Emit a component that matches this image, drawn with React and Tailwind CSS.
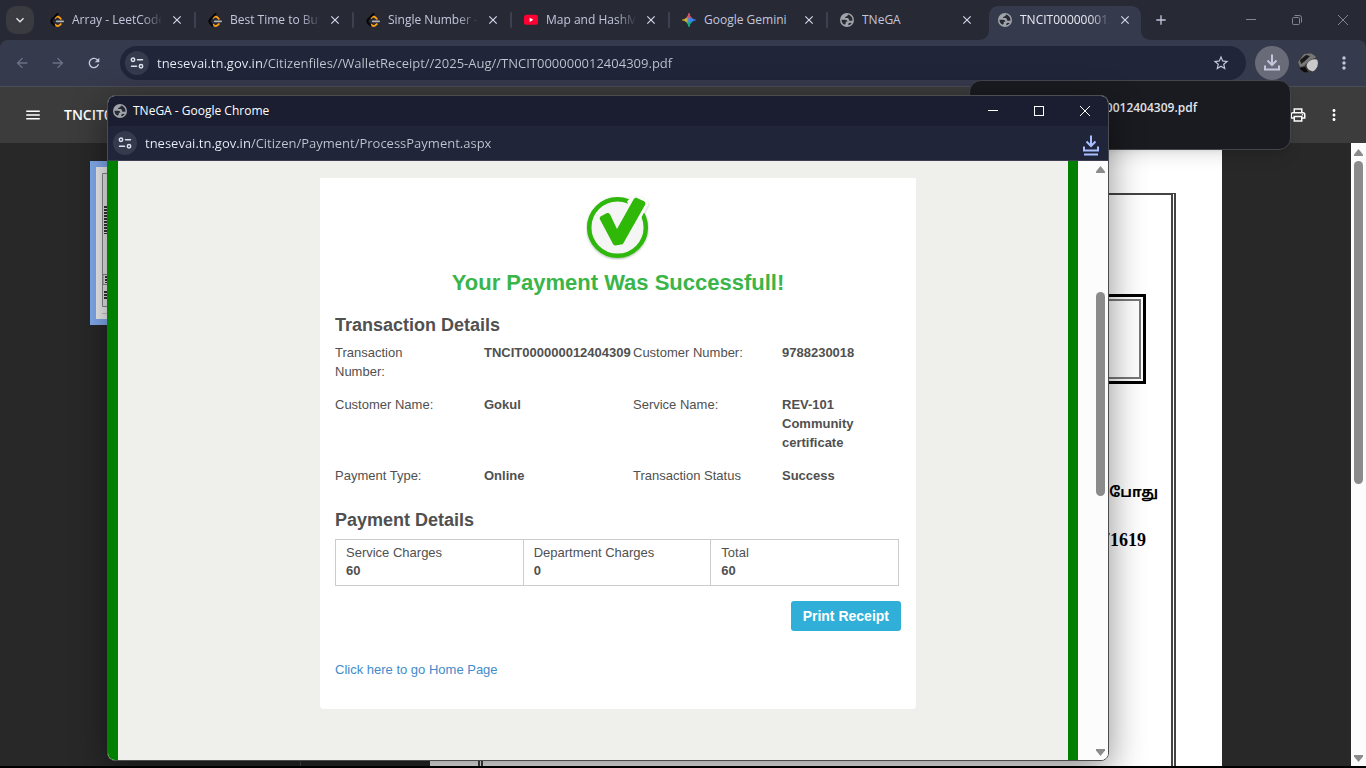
import React from "react";
import {
  MdArrowBack,
  MdArrowForward,
  MdRefresh,
  MdStarBorder,
  MdMoreVert,
  MdMenu,
  MdOutlinePrint,
  MdClose,
  MdAdd,
  MdKeyboardArrowDown,
} from "react-icons/md";

const RECEIPT_NO = "TNCIT000000012404309";

function LeetCodeIcon() {
  return (
    <svg viewBox="0 0 24 24" className="size-3.5" fill="none" strokeLinecap="round" strokeLinejoin="round" aria-hidden="true">
      <path d="M9 8.500c2.600-2.800 5-3 7.500-.5L18.500 10" stroke="#ffa116" strokeWidth="3.200" />
      <path d="M9 20c2.600 3 5.500 3.200 8 .5L18.500 19" stroke="#ffa116" strokeWidth="3.200" />
      <path d="M13 1.500 4 10.700c-2.200 2.300-2.200 4.700 0 7l3.500 3.500" stroke="#050505" strokeWidth="3.400" />
      <path d="M11.500 14.300h11" stroke="#b3b3b3" strokeWidth="3" />
    </svg>
  );
}

function YouTubeIcon() {
  return (
    <svg viewBox="0 0 16 12" className="h-3 w-4" aria-hidden="true">
      <rect width="16" height="11.500" rx="3" fill="#ff0033" />
      <path d="M6.400 3.300v5l4.300-2.500z" fill="#fff" />
    </svg>
  );
}

function GeminiIcon() {
  const star =
    "M12 .5c1 6 5.500 10.500 11.500 11.500C17.500 13 13 17.500 12 23.500 11 17.500 6.500 13 .5 12 6.500 11 11 6.500 12 .5z";
  return (
    <svg viewBox="0 0 24 24" className="size-4" aria-hidden="true">
      <defs>
        <linearGradient id="gemX" x1="0" x2="1" y1="0" y2="0">
          <stop offset="0" stopColor="#fbbc04" />
          <stop offset="0.300" stopColor="#c9b43a" />
          <stop offset="0.500" stopColor="#3b82f6" />
          <stop offset="1" stopColor="#3186ff" />
        </linearGradient>
        <linearGradient id="gemTop" x1="0" x2="0" y1="0" y2="1">
          <stop offset="0" stopColor="#f94543" />
          <stop offset="0.250" stopColor="#f94543" stopOpacity="0.900" />
          <stop offset="0.420" stopColor="#f94543" stopOpacity="0" />
        </linearGradient>
        <linearGradient id="gemBottom" x1="0" x2="0" y1="1" y2="0">
          <stop offset="0" stopColor="#08b962" />
          <stop offset="0.250" stopColor="#08b962" stopOpacity="0.900" />
          <stop offset="0.420" stopColor="#08b962" stopOpacity="0" />
        </linearGradient>
      </defs>
      <path d={star} fill="url(#gemX)" stroke="url(#gemX)" />
      <path d={star} fill="url(#gemTop)" stroke="url(#gemTop)" />
      <path d={star} fill="url(#gemBottom)" stroke="url(#gemBottom)" />
    </svg>
  );
}

function GlobeIcon() {
  return (
    <svg viewBox="0 0 24 24" className="size-3.5 shrink-0" aria-hidden="true">
      <circle cx="12" cy="12" r="12" fill="#a0a4a9" />
      <path
        d="M2.500 11.500h6.300c2.600 0 3.800 1.400 3.800 3.400h-2.800v2.600c0 1.600-1.200 2.200-2.600 2.200C4.300 18 2.500 15 2.500 11.500z"
        fill="#272a35"
      />
      <path
        d="M13.500 2.600c0 2-.8 3-2.800 3.200-1.600.2-2 1-2 2.600h3.500c2.200 0 3 1 3 2.800 0 1.500 1 2.100 2.600 2.100h3.600c.6-5.300-2.800-9.700-7.900-10.700zM17 16.500c-1.700.3-2.800 1.400-2.800 3v1.700c2.500-.5 4.600-1.900 5.900-4z"
        fill="#272a35"
      />
    </svg>
  );
}

function SiteInfoButton() {
  return (
    <button type="button" aria-label="View site information" className="grid size-6 shrink-0 place-items-center rounded-full bg-[#363a4d]">
      <svg viewBox="0 0 16 16" className="size-4" fill="none" stroke="#dfe1ee" strokeWidth="1.500" strokeLinecap="round" aria-hidden="true">
        <circle cx="4" cy="4.700" r="1.700" />
        <path d="M8.500 4.700h5M2.500 11.300h5" />
        <circle cx="12" cy="11.300" r="1.700" />
      </svg>
    </button>
  );
}

function DownloadIcon({ className, underline }) {
  return (
    <svg viewBox="0 0 20 22" className={className} fill="none" stroke="currentColor" strokeWidth="2" aria-hidden="true">
      <path d="M10 1.500v10M5.500 7.500 10 12l4.500-4.500M3 12.500v4h14v-4" />
      {underline && <path d="M3 20.500h14" />}
    </svg>
  );
}

function Avatar() {
  return (
    <svg viewBox="0 0 20 20" className="size-5" aria-hidden="true">
      <defs>
        <clipPath id="avatarClip">
          <circle cx="10" cy="10" r="10" />
        </clipPath>
      </defs>
      <g clipPath="url(#avatarClip)">
        <rect width="20" height="20" fill="#3b3a39" />
        <path d="M0 9 6 1l8-1 5 4-7 3-6 6-4 1z" fill="#77777a" />
        <path d="M2 7 8 2l4 1-5 5-4 3z" fill="#1b1b1b" />
        <path d="M9 11c2-4 7-6 11-4v7l-4 5-5-2c-2-2-3-4-2-6z" fill="#c9c9cc" />
        <path d="m1 15 6-1 3 5-4 1z" fill="#0c0c0c" />
      </g>
    </svg>
  );
}

const tabs = [
  { title: "Array - LeetCode", Icon: LeetCodeIcon, fade: true },
  { title: "Best Time to Buy", Icon: LeetCodeIcon, fade: true },
  { title: "Single Number -", Icon: LeetCodeIcon, fade: true },
  { title: "Map and HashM", Icon: YouTubeIcon, fade: true },
  { title: "Google Gemini", Icon: GeminiIcon },
  { title: "TNeGA", Icon: GlobeIcon },
  { title: RECEIPT_NO, Icon: GlobeIcon, fade: true, active: true },
];

function Tab({ title, Icon, active, fade, divider }) {
  return (
    <li className="relative flex h-[34px] w-[158px] shrink items-center pb-1.5">
      {active && (
        <svg viewBox="0 0 174 34" className="absolute bottom-0 -left-2 h-[34px] w-[174px]" aria-hidden="true">
          <path d="M0 34c6 0 11-3 11-10V10C11 4 15 0 21 0h132c6 0 10 4 10 10v14c0 7 5 10 11 10z" fill="#363a4d" />
        </svg>
      )}
      <button type="button" className="relative flex min-w-0 flex-1 items-center gap-2 pl-3 text-left">
        <span className="flex w-3.5 shrink-0 justify-center">
          <Icon />
        </span>
        <span
          className={
            "w-[89px] overflow-hidden text-xs leading-4 whitespace-nowrap " +
            (fade ? "[mask-image:linear-gradient(90deg,#000_70px,transparent_91px)] " : "") +
            (active ? "text-[#e8e9f2]" : "text-[#c3c6dc]")
          }
        >
          {title}
        </span>
      </button>
      <button type="button" aria-label={"Close " + title} className="relative mr-[11px] grid size-4 place-items-center text-[#d5d8ec]">
        <MdClose className="size-3.5" />
      </button>
      {divider && <span className="-ml-0.5 h-4 w-0.5 rounded bg-[#3d4050]" />}
    </li>
  );
}

function TabStrip() {
  return (
    <header className="flex h-10 shrink-0 items-center bg-[#272a35]">
      <button type="button" aria-label="Search tabs" className="mr-1 ml-1.5 grid size-7 shrink-0 place-items-center rounded-[10px] bg-[#3a3b40] text-[#e3e4ee]">
        <MdKeyboardArrowDown className="size-4" />
      </button>
      <ul className="flex min-w-0 self-end">
        {tabs.map((t, i) => (
          <Tab key={i} {...t} divider={i < 5} />
        ))}
      </ul>
      <button type="button" aria-label="New tab" className="ml-2 grid size-[18px] shrink-0 place-items-center text-[#c3c6dc]">
        <MdAdd className="size-4" />
      </button>
      <div className="ml-auto flex text-[#83858f]">
        <button type="button" aria-label="Minimize browser" className="grid h-8 w-[46px] place-items-center">
          <svg viewBox="0 0 10 10" className="size-2.5" stroke="currentColor" aria-hidden="true"><path d="M0 4.500h10" /></svg>
        </button>
        <button type="button" aria-label="Restore browser" className="grid h-8 w-[46px] place-items-center">
          <svg viewBox="0 0 10 10" className="size-2.5" fill="none" stroke="currentColor" aria-hidden="true">
            <rect x="0.500" y="2.500" width="7" height="7" rx="1" />
            <path d="M2.500.5h5a2 2 0 0 1 2 2v5" />
          </svg>
        </button>
        <button type="button" aria-label="Close browser" className="grid h-8 w-[46px] place-items-center">
          <svg viewBox="0 0 10 10" className="size-2.5" stroke="currentColor" aria-hidden="true"><path d="M0 0 10 10M10 0 0 10" /></svg>
        </button>
      </div>
    </header>
  );
}

function AddressBar() {
  return (
    <div className="bg-[#272a35]">
      <nav className="flex h-[47px] items-center rounded-t-lg border-b border-[#4a4c56] bg-[#363a4d] text-[#c3c6dc]">
        <div className="flex w-[120px] shrink-0 items-center gap-5 pl-3.5">
          <button type="button" aria-label="Back" className="text-[#6f7285]"><MdArrowBack className="size-4" /></button>
          <button type="button" aria-label="Forward" className="text-[#6f7285]"><MdArrowForward className="size-4" /></button>
          <button type="button" aria-label="Reload"><MdRefresh className="size-4" /></button>
        </div>
        <div className="flex h-[34px] min-w-0 flex-1 items-center gap-2 rounded-full bg-[#20253a] pr-4 pl-[5px]">
          <SiteInfoButton />
          <input
            type="text"
            aria-label="Address"
            defaultValue={"tnesevai.tn.gov.in/Citizenfiles//WalletReceipt//2025-Aug//" + RECEIPT_NO + ".pdf"}
            className="min-w-0 flex-1 bg-[linear-gradient(90deg,#eceef8_106px,#c3c6d0_106px)] bg-clip-text text-[13px] leading-5 text-transparent outline-none"
          />
          <button type="button" aria-label="Bookmark this page"><MdStarBorder className="size-[18px]" /></button>
        </div>
        <button type="button" aria-label="Downloads" className="ml-[9px] grid size-[34px] shrink-0 place-items-center rounded-full bg-[#696b79]">
          <DownloadIcon className="mt-0.5 h-[22px] w-5" />
        </button>
        <button type="button" aria-label="Profile" className="ml-[9px] shrink-0"><Avatar /></button>
        <button type="button" aria-label="Browser menu" className="mr-3 ml-4 shrink-0"><MdMoreVert className="size-5" /></button>
      </nav>
    </div>
  );
}

function ScrollBar({ thumb, className }) {
  return (
    <div className={"flex w-[15px] shrink-0 flex-col items-center bg-[#fcfcfc] pb-1 " + className}>
      <svg viewBox="0 0 9 7" className="h-[7px] w-[9px] shrink-0" aria-hidden="true"><path d="M4.500 0 9 5.500V7H0V5.500z" fill="#8b8b8b" /></svg>
      <div className={"w-[9px] rounded-full bg-[#8b8b8b] " + thumb} />
      <svg viewBox="0 0 9 7" className="mt-auto h-[7px] w-[9px] shrink-0" aria-hidden="true"><path d="M4.500 7 9 1.500V0H0v1.500z" fill="#8b8b8b" /></svg>
    </div>
  );
}

function PageThumbnail() {
  return (
    <svg viewBox="0 0 120 164" className="h-[164px] w-[120px]" role="img" aria-label="Page 1 thumbnail">
      <rect width="120" height="164" fill="#83adf0" />
      <rect x="6" y="6" width="108" height="152" fill="#f4f4f4" />
      <path d="M108 12.500H12.500V145.500H108" fill="#ececec" stroke="#8a8a8a" />
      <path d="M12 152.500h96" stroke="#c8c8c8" />
      <path d="M16 45v28" stroke="#333" strokeWidth="4" strokeDasharray="2 1" />
      <path d="M20 113.500h-7v10h7" fill="none" stroke="#888" />
      <path d="M17 115v7M16 130v9" stroke="#333" strokeWidth="4" strokeDasharray="2 1" />
    </svg>
  );
}

function PdfViewer() {
  return (
    <>
      <div className="flex h-14 shrink-0 items-center bg-[#3c3c3c] pr-[23px] pl-6 text-white">
        <button type="button" aria-label="Toggle thumbnails" className="mr-[22px]"><MdMenu className="size-[18px]" /></button>
        <h1 className="text-sm font-semibold">{RECEIPT_NO}.pdf</h1>
        <button type="button" aria-label="Print" className="ml-auto"><MdOutlinePrint className="size-[18px]" /></button>
        <button type="button" aria-label="More actions" className="ml-[18px]"><MdMoreVert className="size-[18px]" /></button>
      </div>
      <div className="flex min-h-0 flex-1 overflow-hidden bg-[#282828]">
        <aside className="flex w-[301px] shrink-0 justify-center border-r border-[#4a4a4a] pt-[18px]">
          <PageThumbnail />
        </aside>
        <main className="flex min-w-0 flex-1 justify-center">
          <div className="flex w-[792px] flex-col bg-white pt-[50px] pr-[46px] pl-12 text-black">
            <div className="flex-1 border-x-[5px] border-t-2 border-[#444] pr-[25px] [border-style:solid_double]">
              <div className="mt-[99px] h-[90px] border-[3px] border-black p-0.5">
                <div className="h-full border-2 border-[#777]" />
              </div>
              <p className="mt-[98px] -mr-3 text-right font-['Noto_Sans_Tamil','Noto_Sans',sans-serif] text-sm leading-6 font-bold">தற்போது</p>
              <p className="mt-[22px] text-right font-['Liberation_Serif',serif] text-lg leading-6 font-bold">TN-7201808171619</p>
            </div>
          </div>
        </main>
        <ScrollBar thumb="mt-[5px] h-[323px]" className="pt-1.5" />
      </div>
    </>
  );
}

function SuccessBadge() {
  return (
    <svg viewBox="0 0 64 64" className="size-16" role="img" aria-label="Success">
      <defs>
        <filter id="badgeShadow" x="-10%" y="-10%" width="120%" height="120%">
          <feDropShadow dx="0" dy="1" stdDeviation="0.800" floodOpacity="0.300" />
        </filter>
      </defs>
      <g filter="url(#badgeShadow)">
        <circle cx="31.500" cy="31.500" r="28.300" fill="#f5f5f5" stroke="#2fb808" strokeWidth="4.500" />
        <path d="M41 5.500 45.500.5c1.500-2 4-2.300 6-1.300l9 4.500c2 1.300 2.500 3.500 1.500 5.500L54 24l-9-10z" fill="#fafafa" />
      </g>
      <path d="M14 23.500c-.6-1.500-.2-2.600 1-3.300l5.500-3c1.600-.6 2.800-.2 3.600 1.400L31 33 47.500 3.500c1-1.600 2.400-2 4-1.300l6.500 3.100c1.500.9 1.800 2.300 1 3.800L37.500 47c-.6 1-1.300 1.500-2.400 1.600l-5.700.8c-1.300 0-2-.5-2.500-1.600z" fill="#2fb808" />
    </svg>
  );
}

const details = [
  ["Transaction Number:", RECEIPT_NO, "Customer Number:", "9788230018"],
  ["Customer Name:", "Gokul", "Service Name:", "REV-101 Community certificate"],
  ["Payment Type:", "Online", "Transaction Status", "Success"],
];

const charges = [
  ["Service Charges", "60"],
  ["Department Charges", "0"],
  ["Total", "60"],
];

function PaymentCard() {
  return (
    <section className="w-[596px] rounded-b bg-white px-[15px] pt-[18px] pb-[30px] font-['Liberation_Sans',Arial,sans-serif] text-[13px] leading-[19px] text-[#505050]">
      <div className="flex justify-center"><SuccessBadge /></div>
      <h2 className="mt-[9px] text-center text-[22px] leading-7 font-bold text-[#39b54a]">Your Payment Was Successfull!</h2>
      <h3 className="mt-[18px] text-lg leading-5 font-bold">Transaction Details</h3>
      <dl className="mt-2 -mr-[30px] grid grid-cols-4 gap-y-3.5">
        {details.flat().map((text, i) =>
          i % 2 === 0 ? (
            <dt key={i} className="pr-[35px]">{text}</dt>
          ) : (
            <dd key={i} className="pr-[30px] font-bold">{text}</dd>
          )
        )}
      </dl>
      <h3 className="mt-[25px] text-lg leading-5 font-bold">Payment Details</h3>
      <table className="mt-[9px] w-[564px] table-fixed border-collapse">
        <tbody>
          <tr>
            {charges.map(([label, value]) => (
              <td key={label} className="border border-[#ccc] px-2.5 pt-1 pb-[5px] leading-[18px]">
                {label}
                <strong className="block">{value}</strong>
              </td>
            ))}
          </tr>
        </tbody>
      </table>
      <div className="mt-[15px] flex justify-end">
        <button type="button" className="h-[30px] rounded-[3px] bg-[#30b0d8] px-3 text-sm font-bold text-white">Print Receipt</button>
      </div>
      <p className="mt-[29px]"><a href="#home" className="text-[#428bca]">Click here to go Home Page</a></p>
    </section>
  );
}

function PopupWindow() {
  return (
    <div className="absolute top-[95px] right-[257px] bottom-[7px] left-[107px] flex flex-col overflow-hidden rounded-lg border border-[#4b4c50] bg-[#fcfcfc] shadow-[0_10px_36px_rgba(0,0,0,0.45)]">
      <div className="flex h-[30px] shrink-0 items-center bg-[#1a1e30] pl-[5px] text-white">
        <GlobeIcon />
        <h2 className="ml-1.5 text-xs">TNeGA - Google Chrome</h2>
        <div className="ml-auto flex">
          <button type="button" aria-label="Minimize" className="grid h-7 w-[46px] place-items-center">
            <svg viewBox="0 0 10 10" className="size-2.5" stroke="currentColor" aria-hidden="true"><path d="M0 4.500h10" /></svg>
          </button>
          <button type="button" aria-label="Maximize" className="grid h-7 w-[46px] place-items-center">
            <svg viewBox="0 0 10 10" className="size-2.5" fill="none" stroke="currentColor" aria-hidden="true"><rect x="0.500" y="0.500" width="9" height="9" /></svg>
          </button>
          <button type="button" aria-label="Close window" className="grid h-7 w-[46px] place-items-center">
            <svg viewBox="0 0 10 10" className="size-2.5" stroke="currentColor" aria-hidden="true"><path d="M0 0 10 10M10 0 0 10" /></svg>
          </button>
        </div>
      </div>
      <div className="flex h-[35px] shrink-0 items-center gap-2 border-b border-[#3d3f50] bg-[#20253a] pr-[7px] pl-[5px]">
        <SiteInfoButton />
        <input
          type="text"
          readOnly
          aria-label="Popup address"
          defaultValue="tnesevai.tn.gov.in/Citizen/Payment/ProcessPayment.aspx"
          className="min-w-0 flex-1 bg-[linear-gradient(90deg,#eceef8_106px,#c3c6d0_106px)] bg-clip-text text-[13px] leading-5 text-transparent outline-none"
        />
        <button type="button" aria-label="Popup downloads" className="text-[#a8c0ff]"><DownloadIcon underline className="mt-1 h-[22px] w-5" /></button>
      </div>
      <div className="flex min-h-0 flex-1">
        <main className="mr-[15px] flex min-w-0 flex-1 items-start overflow-hidden border-x-[10px] border-[#008000] bg-[#eff0eb] pt-[17px] pl-[202px]">
          <PaymentCard />
        </main>
        <ScrollBar thumb="mt-[119px] h-[204px]" className="pt-[5px]" />
      </div>
    </div>
  );
}

export default function App() {
  return (
    <div className="relative flex h-screen flex-col overflow-hidden bg-black pb-0.5 font-['Open_Sans','Noto_Sans',sans-serif]">
      <TabStrip />
      <AddressBar />
      <PdfViewer />
      <div className="absolute top-20 right-[75px] flex h-[70px] w-[322px] justify-end rounded-xl border border-[#45464d] bg-[#1a1b20] pt-[17px] pr-[93px] shadow-lg">
        <p className="text-xs leading-5 font-semibold text-[#e3e4ea]">{RECEIPT_NO}.pdf</p>
      </div>
      <PopupWindow />
    </div>
  );
}
